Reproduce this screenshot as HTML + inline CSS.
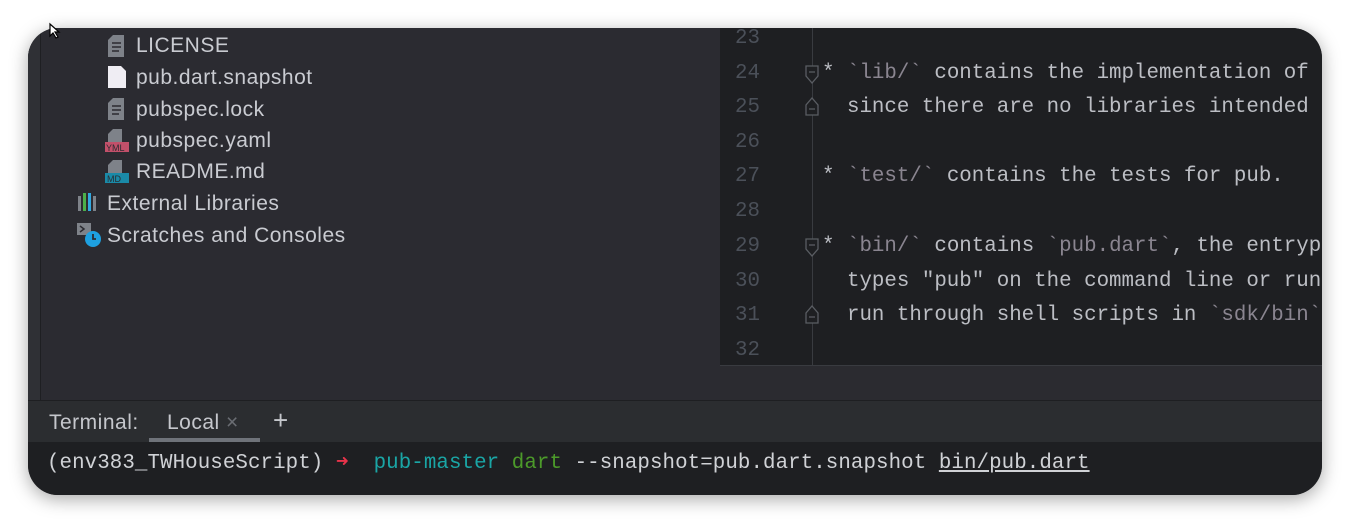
<!DOCTYPE html>
<html><head><meta charset="utf-8"><style>
*{margin:0;padding:0;box-sizing:border-box}
body{width:1350px;height:524px;background:#fff;position:relative;overflow:hidden;font-family:"Liberation Sans",sans-serif}
.win{position:absolute;left:28px;top:28px;width:1294px;height:467px;border-radius:30px;overflow:hidden;background:#2b2d30;box-shadow:0 4px 18px rgba(0,0,0,.35)}
.left{position:absolute;left:0;top:0;width:692px;height:372px;background:#2b2b31;border-left:12px solid #2f3035}
.left .sep{position:absolute;left:0;top:0;bottom:0;width:1px;background:#1e1f22}
.it{position:absolute;color:#c9cbd1;font-size:21px;letter-spacing:0.5px;white-space:nowrap;line-height:24px}
.ic{position:absolute}
.ed{position:absolute;left:692px;top:0;width:602px;height:337px;background:#1e1f22}
.gl{position:absolute;left:784px;top:0;width:1px;height:337px;background:#393b40}
.mono{font-family:"Liberation Mono",monospace;font-size:20.8px;white-space:pre;position:absolute;line-height:24px}
.ln{color:#4b5059;left:707px}
.tx{color:#bcbec4;left:794px}
.dim{color:#8a8590}
.edb{position:absolute;left:692px;top:337px;width:602px;height:35px;background:#2b2b30;border-top:1px solid #393b40}
.tb{position:absolute;left:0;top:372px;width:1294px;height:42px;background:#2b2d30;border-top:1px solid #1e1f22}
.term{position:absolute;left:0;top:414px;width:1294px;height:53px;background:#1e1f22}
</style></head><body>
<div class="win">
 <div class="left"><div class="sep"></div></div>
 <svg class="ic" style="left:80px;top:7px" width="18" height="22"><path d="M5 0h11v22H0V5z" fill="#7e8289"/><path d="M4 8h9M4 12h9M4 16h7" stroke="#2b2b31" stroke-width="1.5"/></svg>
 <div class="it" style="left:108px;top:6px">LICENSE</div>
 <svg class="ic" style="left:80px;top:38px" width="18" height="22"><path d="M0 0h13l5 5v17H0z" fill="#efedf3"/></svg>
 <div class="it" style="left:108px;top:38px">pub.dart.snapshot</div>
 <svg class="ic" style="left:80px;top:70px" width="18" height="22"><path d="M5 0h11v22H0V5z" fill="#7e8289"/><path d="M4 8h9M4 12h9M4 16h7" stroke="#2b2b31" stroke-width="1.5"/></svg>
 <div class="it" style="left:108px;top:70px">pubspec.lock</div>
 <svg class="ic" style="left:77px;top:101px" width="26" height="23"><path d="M8 0h9v14H3V5z" fill="#7e8289"/><rect x="0" y="13" width="24" height="10" fill="#c2506a"/><text x="1" y="22" font-size="9" fill="#2b2b31" font-family="Liberation Sans">YML</text></svg>
 <div class="it" style="left:108px;top:101px">pubspec.yaml</div>
 <svg class="ic" style="left:77px;top:132px" width="26" height="23"><path d="M8 0h9v14H3V5z" fill="#7e8289"/><rect x="0" y="13" width="24" height="10" fill="#1a8aa8"/><text x="2" y="22" font-size="9" fill="#2b2b31" font-family="Liberation Sans">MD</text></svg>
 <div class="it" style="left:108px;top:132px">README.md</div>
 <svg class="ic" style="left:50px;top:165px" width="22" height="18"><rect x="0" y="3" width="3" height="15" fill="#7e8289"/><rect x="5" y="0" width="3" height="18" fill="#4cb04a"/><rect x="10" y="0" width="3" height="18" fill="#31a8e0"/><rect x="15" y="3" width="3" height="15" fill="#7e8289"/></svg>
 <div class="it" style="left:79px;top:164px">External Libraries</div>
 <svg class="ic" style="left:49px;top:195px" width="26" height="26"><rect x="0" y="0" width="14" height="12" fill="#7e8289"/><path d="M3 3l4 3-4 3" stroke="#2b2b31" stroke-width="1.5" fill="none"/><circle cx="16" cy="16" r="8" fill="#1ea0e0"/><path d="M16 11v5h3" stroke="#2b2b31" stroke-width="1.8" fill="none"/></svg>
 <div class="it" style="left:79px;top:196px">Scratches and Consoles</div>
 <div class="ed"></div>
 <div class="gl"></div>
 <div class="mono ln" style="top:-1px">23</div>
 <div class="mono ln" style="top:34px">24</div>
 <div class="mono ln" style="top:68px">25</div>
 <div class="mono ln" style="top:103px">26</div>
 <div class="mono ln" style="top:137px">27</div>
 <div class="mono ln" style="top:172px">28</div>
 <div class="mono ln" style="top:207px">29</div>
 <div class="mono ln" style="top:242px">30</div>
 <div class="mono ln" style="top:276px">31</div>
 <div class="mono ln" style="top:311px">32</div>
 <svg class="ic" style="left:777px;top:37px" width="14" height="20"><path d="M1 1h12v10l-6 7-6-7z" fill="#1e1f22" stroke="#5a5d63" stroke-width="1.3"/><path d="M4 7h6" stroke="#5a5d63" stroke-width="1.3"/></svg>
 <svg class="ic" style="left:777px;top:68px" width="14" height="20"><path d="M1 19h12V9l-6-7-6 7z" fill="#1e1f22" stroke="#5a5d63" stroke-width="1.3"/><path d="M4 13h6" stroke="#5a5d63" stroke-width="1.3"/></svg>
 <svg class="ic" style="left:777px;top:210px" width="14" height="20"><path d="M1 1h12v10l-6 7-6-7z" fill="#1e1f22" stroke="#5a5d63" stroke-width="1.3"/><path d="M4 7h6" stroke="#5a5d63" stroke-width="1.3"/></svg>
 <svg class="ic" style="left:777px;top:276px" width="14" height="20"><path d="M1 19h12V9l-6-7-6 7z" fill="#1e1f22" stroke="#5a5d63" stroke-width="1.3"/><path d="M4 13h6" stroke="#5a5d63" stroke-width="1.3"/></svg>
 <div class="mono tx" style="top:34px">* <span class="dim">`lib/`</span> contains the implementation of</div>
 <div class="mono tx" style="top:68px">  since there are no libraries intended</div>
 <div class="mono tx" style="top:137px">* <span class="dim">`test/`</span> contains the tests for pub.</div>
 <div class="mono tx" style="top:207px">* <span class="dim">`bin/`</span> contains <span class="dim">`pub.dart`</span>, the entryp</div>
 <div class="mono tx" style="top:242px">  types "pub" on the command line or run</div>
 <div class="mono tx" style="top:276px">  run through shell scripts in <span class="dim">`sdk/bin`</span></div>
 <div class="edb"></div>
 <div class="tb">
  <div class="it" style="left:21px;top:10px;color:#c5c7cc">Terminal:</div>
  <div class="it" style="left:139px;top:10px;color:#c5c7cc">Local <span style="color:#6a6d73">×</span></div>
  <div style="position:absolute;left:121px;top:37px;width:111px;height:4px;background:#6f737a"></div>
  <div class="it" style="left:245px;top:7px;color:#c5c7cc;font-size:26px">+</div>
 </div>
 <div class="term">
  <div class="mono" style="left:19px;top:10px;color:#d0d2d6;letter-spacing:0.08px">(env383_TWHouseScript) <span style="color:#e8334a">➜</span>  <span style="color:#1aa5a5">pub-master</span> <span style="color:#4c9a2a">dart</span> --snapshot=pub.dart.snapshot <span style="text-decoration:underline">bin/pub.dart</span></div>
 </div>
</div>
<svg style="position:absolute;left:48px;top:22px" width="16" height="18"><path d="M2 2v12l3-3 3 5 2-1-3-5h4z" fill="#fff" stroke="#000" stroke-width="1.2"/></svg>
</body></html>
